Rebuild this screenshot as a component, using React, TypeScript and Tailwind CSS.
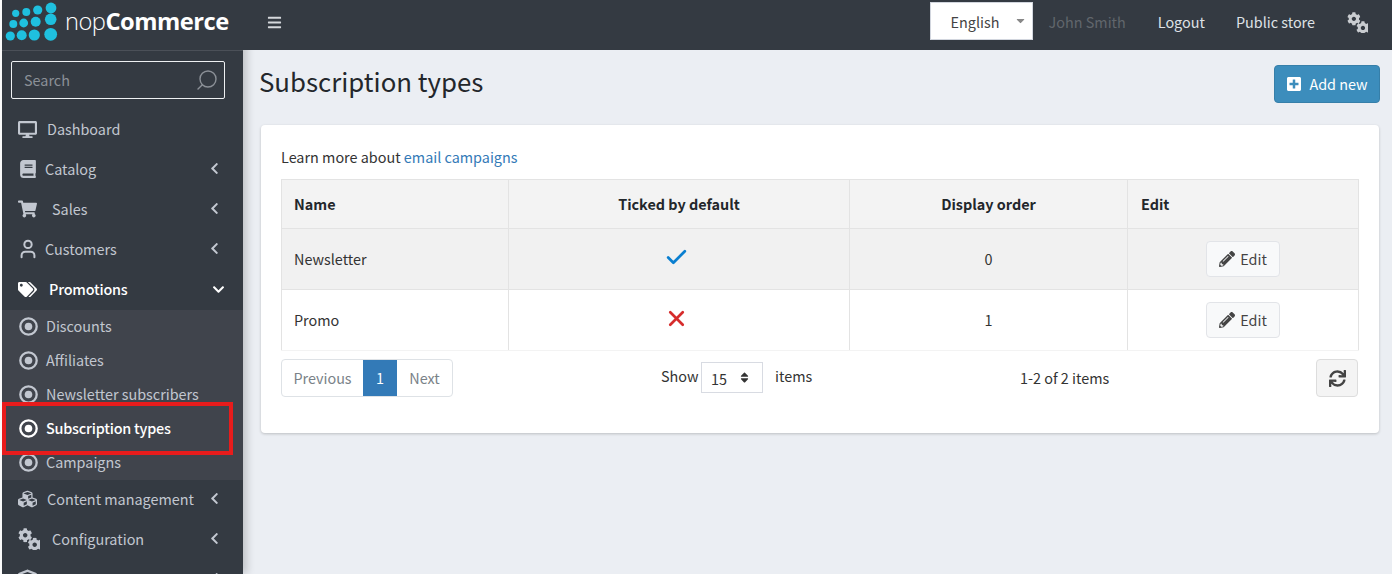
import React from "react";
import {
  FaDesktop, FaBook, FaShoppingCart, FaTags, FaCubes, FaCog, FaCube,
  FaChevronLeft, FaChevronDown, FaPencilAlt, FaSync, FaPlusSquare, FaBars, FaCaretDown, FaSort,
} from "react-icons/fa";
import { Search, User, Check, X } from "lucide-react";

const dots: [number, number, number][] = [
  [15.7, 13.3, 3.6], [26.3, 12, 4], [37.7, 10, 4.6], [51, 8, 5.4],
  [13.3, 24, 4], [23.7, 23, 4.4], [35.7, 21.7, 5], [50.7, 19.3, 5.8],
  [10.3, 36, 4.6], [21.7, 35.3, 5], [34.3, 35, 5.6], [50.7, 34.3, 6.4],
];

function Gears({ className }: { className: string }) {
  return (
    <svg viewBox="0 0 22 22" className={className} fill="currentColor">
      <FaCog x={0} y={0} width={12} height={12} />
      <FaCog x={9.5} y={9.5} width={12} height={12} />
    </svg>
  );
}

function Dot({ className }: { className: string }) {
  return (
    <svg viewBox="0 0 19 19" className={className}>
      <circle cx="9.5" cy="9.5" r="8.2" fill="none" stroke="currentColor" strokeWidth="2.3" />
      <circle cx="9.5" cy="9.5" r="3.8" fill="currentColor" />
    </svg>
  );
}

function Logo() {
  return (
    <div className="h-[51px] shrink-0 border-b border-[#4b5058] flex items-center relative">
      <svg width="62" height="50" viewBox="0 0 62 50" className="shrink-0 -ml-[2px] mb-[1px]">
        {dots.map(([x, y, r], i) => (
          <circle key={i} cx={x} cy={y} r={r} fill="#1fc0df" />
        ))}
      </svg>
      <div className="ml-[3px] -mt-[7px] text-[23.7px] leading-none tracking-[-0.5px] text-white font-['Open_Sans',sans-serif] whitespace-nowrap">
        <span className="font-light">nop</span>
        <span className="font-bold">Commerce</span>
      </div>
    </div>
  );
}

function MainItem({
  icon, label, gap, chevron = "left", active = false,
}: { icon: React.ReactNode; label?: string; gap: string; chevron?: "left" | "down" | "none"; active?: boolean }) {
  return (
    <div className={`h-10 shrink-0 flex items-center pl-[16px] pr-[17px] text-[14.4px] ${active ? "text-white font-medium tracking-[-0.2px]" : "text-[#c2c7d0]"}`}>
      <span className="w-[19px] flex justify-center shrink-0 -mt-[2px]">{icon}</span>
      {label && <span className={`${gap} -mt-[3px] whitespace-nowrap`}>{label}</span>}
      {chevron === "left" && <FaChevronLeft className="ml-auto mr-[5px] -mt-[3px] text-[13px] text-[#c2c7d0]" />}
      {chevron === "down" && <FaChevronDown className="ml-auto mr-[1px] -mt-[2px] text-[13px] text-white" />}
    </div>
  );
}

function SubItem({ label, active = false }: { label: string; active?: boolean }) {
  return (
    <div className={`h-[34px] flex items-center pl-[17px] text-[14.4px] ${active ? "text-white font-medium tracking-[-0.2px]" : "text-[#c2c7d0]"}`}>
      <Dot className="size-[19px] shrink-0 -mt-[1px]" />
      <span className="ml-[8px] -mt-[2px]">{label}</span>
    </div>
  );
}

function Sidebar() {
  return (
    <aside className="w-[241px] ml-[2px] shrink-0 bg-[#343a42] h-full overflow-hidden relative z-10 shadow-[4px_0_8px_rgba(0,0,0,0.18)] flex flex-col">
      <Logo />
      <div className="ml-[9px] mr-[18px] mt-[10px] mb-[11px] h-[38px] shrink-0 border border-[#eef0f2] rounded-[2px] flex items-center pl-[12px] pr-[5px] text-[14.4px] text-[#8b9097]">
        <span>Search</span>
        <Search className="ml-auto size-[24px] text-[#8b9097] -scale-x-100" strokeWidth={1.4} />
      </div>
      <MainItem icon={<FaDesktop className="text-[19px]" />} label="Dashboard" gap="ml-[10px]" chevron="none" />
      <MainItem icon={<FaBook className="text-[18px]" />} label="Catalog" gap="ml-[8px]" />
      <MainItem icon={<FaShoppingCart className="text-[20px]" />} label="Sales" gap="ml-[15px]" />
      <MainItem icon={<User className="size-[22px] shrink-0" strokeWidth={2.2} />} label="Customers" gap="ml-[8px]" />
      <MainItem icon={<FaTags className="text-[21px] text-white" />} label="Promotions" gap="ml-[12px]" chevron="down" active />
      <div className="bg-[#40444c] shrink-0">
        <SubItem label="Discounts" />
        <SubItem label="Affiliates" />
        <SubItem label="Newsletter subscribers" />
        <SubItem label="Subscription types" active />
        <SubItem label="Campaigns" />
      </div>
      <MainItem icon={<FaCubes className="text-[20px]" />} label="Content management" gap="ml-[10px]" />
      <MainItem icon={<Gears className="size-[22px] shrink-0 ml-[2px]" />} label="Configuration" gap="ml-[15px]" />
      <MainItem icon={<FaCube className="text-[22px]" />} gap="ml-[10px]" />
    </aside>
  );
}

function TopBar() {
  return (
    <header className="h-[50px] shrink-0 relative z-20 bg-[#343a42] flex items-center pb-[6px] text-[14.4px] text-[#dfe2e6]">
      <FaBars className="ml-[24px] text-[15px] text-[#d5d8dc]" />
      <div className="ml-auto -mt-[2px] h-[38px] w-[103px] bg-white border border-[#d2d6de] flex items-center pl-[20px] pr-[5px] text-[#444]">
        <span className="mt-[1px]">English</span>
        <FaCaretDown className="ml-auto -mt-[1px] text-[13px] text-[#888]" />
      </div>
      <span className="ml-[16px] text-[#61666c]">John Smith</span>
      <span className="ml-[32px]">Logout</span>
      <span className="ml-[31px]">Public store</span>
      <Gears className="ml-[32px] mr-[24px] size-[21px] text-[#c9ccd0]" />
    </header>
  );
}

function EditButton() {
  return (
    <div className="inline-flex align-middle items-center justify-center h-[36px] w-[74px] bg-[#f8f9fa] border border-[#e2e4e8] rounded-[4px] text-[#444]">
      <FaPencilAlt className="text-[16px] mr-[5px]" />
      <span>Edit</span>
    </div>
  );
}

function Table() {
  const th = "h-[49px] border border-[#e3e3e3] bg-[#f3f3f3] font-bold px-[12px] text-[#23272b]";
  const td = "h-[61px] border border-[#e3e3e3] px-[12px] text-[#333]";
  const tdLast = "h-[61px] border border-[#e3e3e3] border-b-[#f3f3f3] px-[12px] text-[#333]";
  return (
    <table className="w-[1077px] table-fixed border-collapse text-[14.4px]">
      <colgroup>
        <col className="w-[227px]" />
        <col className="w-[341px]" />
        <col className="w-[278px]" />
        <col className="w-[231px]" />
      </colgroup>
      <thead>
        <tr>
          <th className={`${th} text-left`}>Name</th>
          <th className={`${th} text-center`}>Ticked by default</th>
          <th className={`${th} text-center`}>Display order</th>
          <th className={`${th} text-left pl-[13px]`}>Edit</th>
        </tr>
      </thead>
      <tbody>
        <tr className="bg-[#f1f1f1]">
          <td className={td}>Newsletter</td>
          <td className={`${td} text-center`}><Check className="inline-block text-[#0a7fd0] size-[25px] -mt-[6px] -ml-[5px]" strokeWidth={2.6} /></td>
          <td className={`${td} text-center`}>0</td>
          <td className={`${td} text-center`}><EditButton /></td>
        </tr>
        <tr className="bg-white">
          <td className={tdLast}>Promo</td>
          <td className={`${tdLast} text-center`}><X className="inline-block text-[#d62c2c] size-[25px] -mt-[6px] -ml-[6px]" strokeWidth={2.6} /></td>
          <td className={`${tdLast} text-center`}>1</td>
          <td className={`${tdLast} text-center`}><EditButton /></td>
        </tr>
      </tbody>
    </table>
  );
}

function Footer() {
  return (
    <div className="mt-[8px] h-[38px] flex items-center text-[14.4px] text-[#333]">
      <div className="flex h-[38px] w-[172px] border border-[#dee2e6] rounded-[4px] overflow-hidden text-[#7a8288]">
        <span className="w-[81px] flex items-center justify-center">Previous</span>
        <span className="w-[34px] flex items-center justify-center bg-[#337ab7] text-white">1</span>
        <span className="flex-1 flex items-center justify-center">Next</span>
      </div>
      <span className="ml-[208px] -mt-[5px] w-[37px]">Show</span>
      <div className="ml-[3px] h-[31px] w-[62px] border border-[#d8dbe2] flex items-center pl-[9px] pr-[11px] -mt-[1px]">
        <span className="mt-[2px]">15</span>
        <FaSort className="ml-auto text-[13px] text-[#333]" />
      </div>
      <span className="ml-[12px] -mt-[5px] w-[37px]">items</span>
      <span className="ml-[208px]">1-2 of 2 items</span>
      <div className="ml-auto mr-[1px] h-[38px] w-[42px] flex items-center justify-center bg-[#f4f4f4] border border-[#dddddd] rounded-[4px] text-[#444]">
        <FaSync className="text-[17px]" />
      </div>
    </div>
  );
}

export default function App() {
  return (
    <div className="relative w-[1392px] h-[574px] overflow-hidden flex bg-white font-['Noto_Sans_CJK_SC','Noto_Sans_CJK_JP',sans-serif]">
      <Sidebar />
      <div className="flex-1 flex flex-col bg-[#ebeef3]">
        <TopBar />
        <div className="flex items-start justify-between pl-[16px] pr-[12px] pt-[15px]">
          <h1 className="text-[25.8px] leading-[36px] -mt-[2px] text-[#23272b]">Subscription types</h1>
          <div className="h-[38px] w-[106px] flex items-center justify-center bg-[#3c8dbc] border border-[#367fa9] rounded-[4px] text-white text-[14.4px]">
            <FaPlusSquare className="text-[16px] mr-[7px]" />
            <span>Add new</span>
          </div>
        </div>
        <div className="mt-[22px] ml-[18px] mr-[13px] h-[308px] bg-white rounded-[4px] shadow-[0_1px_3px_rgba(0,0,0,0.2)] px-[20px] pt-[21px]">
          <p className="text-[14.4px] leading-[22px] text-[#333] mb-[11px]">
            Learn more about <span className="text-[#337ab7]">email campaigns</span>
          </p>
          <Table />
          <Footer />
        </div>
      </div>
      <div className="absolute left-[2px] top-[402px] w-[231px] h-[53px] border-[4px] border-[#e81c1c] z-20 pointer-events-none" />
    </div>
  );
}
